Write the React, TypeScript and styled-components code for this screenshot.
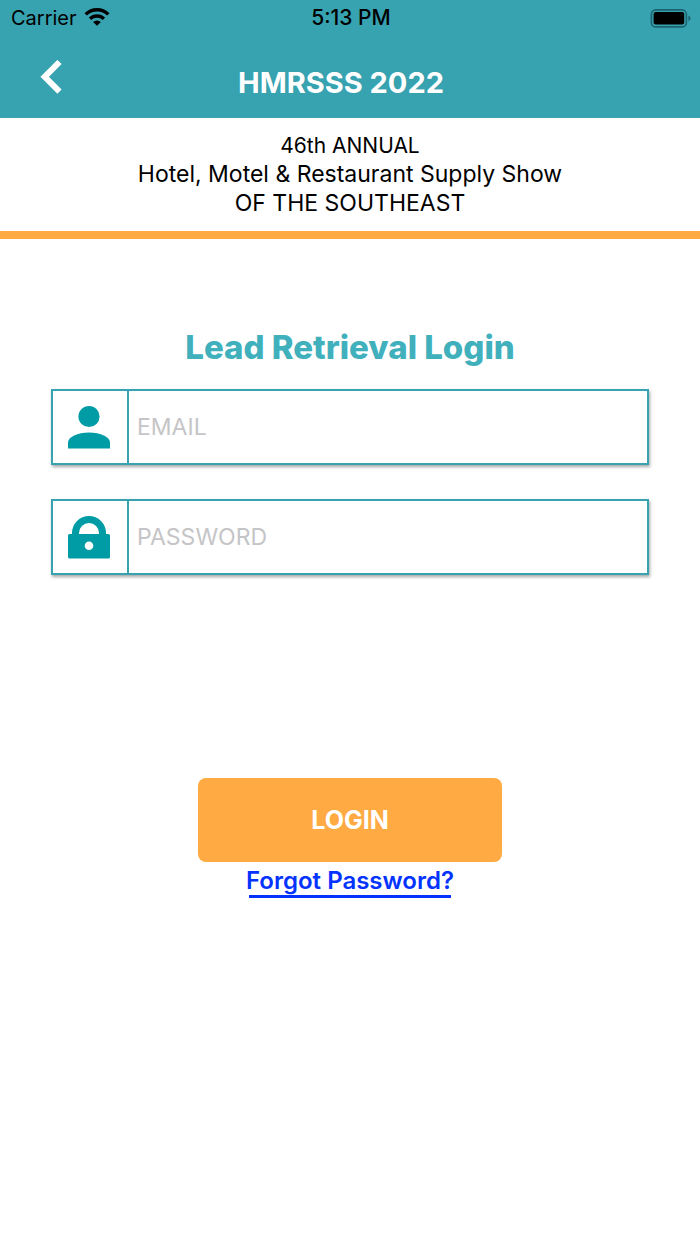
import React, { useState } from "react";
import styled, { createGlobalStyle } from "styled-components";

const teal = "#37a2b0";
const iconTeal = "#009ca6";
const orange = "#ffaa42";

const GlobalStyle = createGlobalStyle`
  *, *::before, *::after { box-sizing: border-box; }
  body {
    margin: 0;
    background: #fff;
    color: #000;
    font-family: Inter, "Liberation Sans", sans-serif;
  }
`;

const Screen = styled.div`
  min-height: 100vh;
  display: flex;
  flex-direction: column;
`;

const Header = styled.header`
  background: ${teal};
`;

const StatusBar = styled.div`
  display: grid;
  grid-template-columns: 1fr auto 1fr;
  align-items: center;
  height: 36px;
  padding: 0 9px 0 11px;
  font-size: 20px;
  line-height: 24px;
`;

const Carrier = styled.div`
  display: flex;
  align-items: center;
  gap: 7px;
`;

const Clock = styled.time`
  font-size: 21px;
  font-weight: 500;
`;

const Battery = styled.svg`
  justify-self: end;
`;

const NavBar = styled.div`
  display: grid;
  grid-template-columns: 72px 1fr 90px;
  align-items: center;
  height: 82px;
`;

const BackButton = styled.button`
  display: flex;
  justify-content: center;
  padding: 0 0 0 30px;
  border: 0;
  background: none;
  cursor: pointer;
`;

const NavTitle = styled.h1`
  margin: 0;
  padding-top: 12px;
  color: #fff;
  font-size: 29px;
  font-weight: 700;
  line-height: 36px;
  text-align: center;
`;

const Banner = styled.section`
  padding: 13px 16px 13px;
  border-bottom: 8px solid ${orange};
  text-align: center;
`;

const BannerLine = styled.p<{ $small?: boolean }>`
  margin: 0;
  font-size: ${(p) => (p.$small ? 21 : 23)}px;
  line-height: 29px;
`;

const Form = styled.form`
  display: flex;
  flex-direction: column;
  align-items: center;
  padding: 88px 51px 0;
`;

const FormTitle = styled.h2`
  margin: 0 0 22px;
  color: #41b0bd;
  font-size: 33px;
  font-weight: 800;
  line-height: 40px;
`;

const Fields = styled.div`
  display: grid;
  gap: 34px;
  width: 100%;
`;

const Field = styled.label`
  display: flex;
  height: 76px;
  border: 2px solid ${teal};
  background: #fff;
  box-shadow: 1px 2px 3px rgba(0, 0, 0, 0.35);
`;

const FieldIcon = styled.span`
  display: flex;
  align-items: center;
  justify-content: center;
  flex: 0 0 76px;
  padding-right: 2px;
  border-right: 2px solid ${teal};
`;

const Input = styled.input`
  flex: 1;
  min-width: 0;
  padding: 0 8px;
  border: 0;
  outline: 0;
  background: none;
  color: #000;
  font: 400 23px Inter, "Liberation Sans", sans-serif;

  &::placeholder {
    color: #c5c5c7;
    opacity: 1;
  }
`;

const Actions = styled.div`
  display: flex;
  flex-direction: column;
  align-items: center;
  margin-top: 203px;
`;

const LoginButton = styled.button`
  width: 304px;
  height: 84px;
  border: 0;
  border-radius: 8px;
  background: ${orange};
  color: #fff;
  font: 700 25px Inter, "Liberation Sans", sans-serif;
  cursor: pointer;
`;

const ForgotLink = styled.a`
  margin-top: 4px;
  color: #0433ff;
  font-size: 24px;
  font-weight: 600;
  line-height: 29px;
  text-decoration: none;

  &::after {
    content: "";
    display: block;
    height: 3px;
    margin: 0 3px;
    background: currentColor;
  }
`;

const WifiIcon = () => (
  <svg width="26" height="20" viewBox="0 0 26 20" fill="none" stroke="#000" strokeWidth="3.4" aria-hidden="true">
    <path d="M1.7 6.4a16 16 0 0 1 22.6 0" />
    <path d="M6 10.8a10 10 0 0 1 14 0" />
    <path d="M13 17.8l-3.9-3.8a5.6 5.6 0 0 1 7.8 0z" fill="#000" stroke="none" />
  </svg>
);

const BatteryIcon = () => (
  <Battery width="41" height="19" viewBox="0 0 41 19" role="img" aria-label="Battery full">
    <rect x="1.4" y="0.9" width="35" height="17" rx="4.5" fill="none" stroke="#1d6470" strokeWidth="1.6" />
    <rect x="3.6" y="3" width="30.6" height="12.6" rx="2" />
    <path d="M38.4 6.400c2.700.9 2.700 4.900 0 5.800z" fill="#1d6470" />
  </Battery>
);

const BackIcon = () => (
  <svg width="22" height="34" viewBox="0 0 22 34" fill="none" stroke="#fff" strokeWidth="6" aria-hidden="true">
    <path d="M19.5 2L4.700 16.800l14.800 14.800" />
  </svg>
);

const PersonIcon = () => (
  <svg width="44" height="44" viewBox="0 0 44 44" fill={iconTeal} aria-hidden="true">
    <circle cx="22" cy="11.5" r="10.6" />
    <path d="M1 43.5v-6C1 32 10.5 27.5 22 27.5S43 32 43 37.5v6z" />
  </svg>
);

const LockIcon = () => (
  <svg width="44" height="44" viewBox="0 0 44 44" fill={iconTeal} aria-hidden="true">
    <path
      fillRule="evenodd"
      d="M5 19v-1a17 17 0 0 1 34 0v1h2.5A1.5 1.5 0 0 1 43 20.5V42a1.5 1.5 0 0 1-1.5 1.5h-39A1.5 1.5 0 0 1 1 42V20.5A1.5 1.5 0 0 1 2.5 19zm7 0h20v-1a10 10 0 0 0-20 0zm10 7.5a4.3 4.3 0 1 0 0 8.6 4.3 4.3 0 0 0 0-8.6z"
    />
  </svg>
);

export default function App() {
  const [email, setEmail] = useState("");
  const [password, setPassword] = useState("");

  return (
    <Screen>
      <GlobalStyle />
      <Header>
        <StatusBar>
          <Carrier>
            Carrier
            <WifiIcon />
          </Carrier>
          <Clock>5:13 PM</Clock>
          <BatteryIcon />
        </StatusBar>
        <NavBar>
          <BackButton type="button" aria-label="Back">
            <BackIcon />
          </BackButton>
          <NavTitle>HMRSSS 2022</NavTitle>
        </NavBar>
      </Header>
      <Banner>
        <BannerLine $small>46th ANNUAL</BannerLine>
        <BannerLine>Hotel, Motel &amp; Restaurant Supply Show</BannerLine>
        <BannerLine>OF THE SOUTHEAST</BannerLine>
      </Banner>
      <Form onSubmit={(e) => e.preventDefault()}>
        <FormTitle>Lead Retrieval Login</FormTitle>
        <Fields>
          <Field>
            <FieldIcon>
              <PersonIcon />
            </FieldIcon>
            <Input
              type="email"
              aria-label="Email"
              placeholder="EMAIL"
              value={email}
              onChange={(e) => setEmail(e.target.value)}
            />
          </Field>
          <Field>
            <FieldIcon>
              <LockIcon />
            </FieldIcon>
            <Input
              type="password"
              aria-label="Password"
              placeholder="PASSWORD"
              value={password}
              onChange={(e) => setPassword(e.target.value)}
            />
          </Field>
        </Fields>
        <Actions>
          <LoginButton type="submit">LOGIN</LoginButton>
          <ForgotLink href="#forgot">Forgot Password?</ForgotLink>
        </Actions>
      </Form>
    </Screen>
  );
}
